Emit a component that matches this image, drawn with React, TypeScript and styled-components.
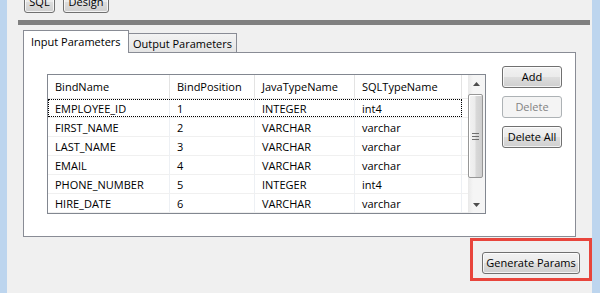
import React from 'react';
import styled, { createGlobalStyle } from 'styled-components';

const GlobalStyle = createGlobalStyle`
    html, body {
        margin: 0;
        padding: 0;
    }
    body {
        width: 600px;
        height: 293px;
        overflow: hidden;
        background: #f0f0f0;
        font-family: "Open Sans", "Liberation Sans", sans-serif;
        font-size: 11px;
        color: #000;
    }
`;

interface Param {
    name: string;
    position: number;
    javaType: string;
    sqlType: string;
}

const params: Param[] = [
    { name: 'EMPLOYEE_ID', position: 1, javaType: 'INTEGER', sqlType: 'int4' },
    { name: 'FIRST_NAME', position: 2, javaType: 'VARCHAR', sqlType: 'varchar' },
    { name: 'LAST_NAME', position: 3, javaType: 'VARCHAR', sqlType: 'varchar' },
    { name: 'EMAIL', position: 4, javaType: 'VARCHAR', sqlType: 'varchar' },
    { name: 'PHONE_NUMBER', position: 5, javaType: 'INTEGER', sqlType: 'int4' },
    { name: 'HIRE_DATE', position: 6, javaType: 'VARCHAR', sqlType: 'varchar' },
];

const columns = ['BindName', 'BindPosition', 'JavaTypeName', 'SQLTypeName'];

const Window = styled.div`
    display: flex;
    width: 600px;
    height: 293px;
    overflow: hidden;
    background: #f0f0f0;
`;

const FrameEdge = styled.div<{ $width: number }>`
    width: ${(props) => props.$width}px;
    flex-shrink: 0;
    background: #bdd5ee;
`;

const Content = styled.div`
    flex: 1;
    min-width: 0;
    display: flex;
    flex-direction: column;
`;

const Toolbar = styled.div`
    height: 13px;
    display: flex;
    align-items: flex-end;
    gap: 8px;
    padding-left: 17px;
    overflow: hidden;
`;

const Button = styled.button<{ $width: number }>`
    box-sizing: border-box;
    flex-shrink: 0;
    width: ${(props) => props.$width}px;
    height: 22px;
    padding: 0 0 1px;
    border: 1px solid #707070;
    border-radius: 3px;
    background: linear-gradient(#f2f2f2 0%, #ebebeb 48%, #dddddd 52%, #cfcfcf 100%);
    box-shadow: inset 0 0 0 1px rgba(255, 255, 255, 0.75);
    font: inherit;
    color: #000;
    &:disabled {
        border-color: #adb2b5;
        background: #f4f4f4;
        box-shadow: none;
        color: #838383;
    }
`;

const SplitBar = styled.div`
    height: 5px;
    margin: 7px 2px 0 11px;
    background: #808080;
`;

const TabArea = styled.div`
    display: flex;
    flex-direction: column;
    margin: 5px 16px 0 16px;
`;

const TabStrip = styled.div`
    height: 22px;
    display: flex;
    align-items: flex-end;
`;

const Tab = styled.div<{ $active?: boolean; $width: number }>`
    box-sizing: border-box;
    position: relative;
    z-index: ${(props) => (props.$active ? 2 : 1)};
    width: ${(props) => props.$width}px;
    height: ${(props) => (props.$active ? 23 : 19)}px;
    margin-bottom: ${(props) => (props.$active ? -1 : 0)}px;
    margin-left: ${(props) => (props.$active ? 0 : -1)}px;
    display: flex;
    align-items: center;
    padding: ${(props) => (props.$active ? '0 0 2px 7px' : '0 0 0 4px')};
    border: 1px solid #898c95;
    border-bottom: none;
    background: ${(props) => (props.$active ? '#fff' : 'linear-gradient(#f3f3f3, #e4e4e4)')};
    white-space: nowrap;
`;

const Panel = styled.div`
    box-sizing: border-box;
    height: 185px;
    display: flex;
    align-items: flex-start;
    gap: 16px;
    padding: 13px 13px 0 23px;
    border: 1px solid #898c95;
    background: #fff;
`;

const ListView = styled.div`
    box-sizing: border-box;
    flex-shrink: 0;
    width: 439px;
    height: 140px;
    margin-top: 8px;
    display: flex;
    border: 1px solid #828790;
    overflow: hidden;
`;

const ListBody = styled.div`
    flex: 1;
    display: flex;
    flex-direction: column;
`;

const Row = styled.div<{ $header?: boolean }>`
    box-sizing: border-box;
    display: flex;
    flex-shrink: 0;
    height: ${(props) => (props.$header ? 24 : 19)}px;
    border-bottom: 1px solid ${(props) => (props.$header ? '#eaeaea' : '#f0f0f0')};
`;

const Cells = styled.div<{ $focused?: boolean }>`
    display: grid;
    grid-template-columns: 122px 85px 100px 107px;
    outline: ${(props) => (props.$focused ? '1px dotted #000' : 'none')};
    outline-offset: -1px;
`;

const Cell = styled.div<{ $header?: boolean }>`
    box-sizing: border-box;
    display: flex;
    align-items: center;
    padding-left: 7px;
    border-right: 1px solid ${(props) => (props.$header ? '#e3e3e3' : '#edf0f4')};
    white-space: nowrap;
    overflow: hidden;
`;

const Filler = styled.div`
    flex: 1;
`;

const ScrollBar = styled.div`
    width: 17px;
    flex-shrink: 0;
    display: flex;
    flex-direction: column;
    background: linear-gradient(90deg, #e9e9e9, #f5f5f5 30%, #f5f5f5);
`;

const ArrowBox = styled.div`
    height: 17px;
    display: flex;
    align-items: center;
    justify-content: center;
`;

const Track = styled.div`
    flex: 1;
    padding: 2px 1px 0 0;
`;

const Thumb = styled.div`
    box-sizing: border-box;
    width: 15px;
    height: 84px;
    display: flex;
    align-items: center;
    justify-content: center;
    border: 1px solid #979797;
    border-radius: 2px;
    background: linear-gradient(90deg, #f2f2f2, #ececec 45%, #d8d8d8 55%, #cfcfcf);
    box-shadow: inset 1px 1px 0 #fff;
`;

const ButtonColumn = styled.div`
    display: flex;
    flex-direction: column;
    gap: 8px;
`;

const Footer = styled.div`
    display: flex;
    justify-content: flex-end;
    margin-top: 1px;
`;

const Highlight = styled.div`
    border: 3px solid #e8453c;
    padding: 11px 9px 4px 9px;
`;

function Arrow({ down }: { down?: boolean }) {
    return (
        <svg width="7" height="4" viewBox="0 0 7 4">
            <path d={down ? 'M0 0H7L3.5 4Z' : 'M0 4H7L3.5 0Z'} fill="#4d4d4d" />
        </svg>
    );
}

function Grip() {
    return (
        <svg width="7" height="7" viewBox="0 0 7 7">
            <path d="M0 0.5H7M0 3.5H7M0 6.5H7" stroke="#6e6e6e" strokeWidth="1" />
        </svg>
    );
}

function App() {
    return (
        <Window>
            <GlobalStyle />
            <FrameEdge $width={7} />
            <Content>
                <Toolbar>
                    <Button $width={31}>SQL</Button>
                    <Button $width={46}>Design</Button>
                </Toolbar>
                <SplitBar />
                <TabArea>
                    <TabStrip>
                        <Tab $active $width={106}>Input Parameters</Tab>
                        <Tab $width={109}>Output Parameters</Tab>
                    </TabStrip>
                    <Panel>
                        <ListView>
                            <ListBody>
                                <Row $header>
                                    <Cells>
                                        {columns.map((c) => (
                                            <Cell key={c} $header>{c}</Cell>
                                        ))}
                                    </Cells>
                                    <Filler />
                                </Row>
                                {params.map((p, i) => (
                                    <Row key={p.name}>
                                        <Cells $focused={i === 0}>
                                            <Cell>{p.name}</Cell>
                                            <Cell>{p.position}</Cell>
                                            <Cell>{p.javaType}</Cell>
                                            <Cell>{p.sqlType}</Cell>
                                        </Cells>
                                        <Filler />
                                    </Row>
                                ))}
                            </ListBody>
                            <ScrollBar>
                                <ArrowBox><Arrow /></ArrowBox>
                                <Track>
                                    <Thumb><Grip /></Thumb>
                                </Track>
                                <ArrowBox><Arrow down /></ArrowBox>
                            </ScrollBar>
                        </ListView>
                        <ButtonColumn>
                            <Button $width={60}>Add</Button>
                            <Button $width={60} disabled>Delete</Button>
                            <Button $width={60}>Delete All</Button>
                        </ButtonColumn>
                    </Panel>
                </TabArea>
                <Footer>
                    <Highlight>
                        <Button $width={98}>Generate Params</Button>
                    </Highlight>
                </Footer>
            </Content>
            <FrameEdge $width={8} />
        </Window>
    );
}

export default App;
